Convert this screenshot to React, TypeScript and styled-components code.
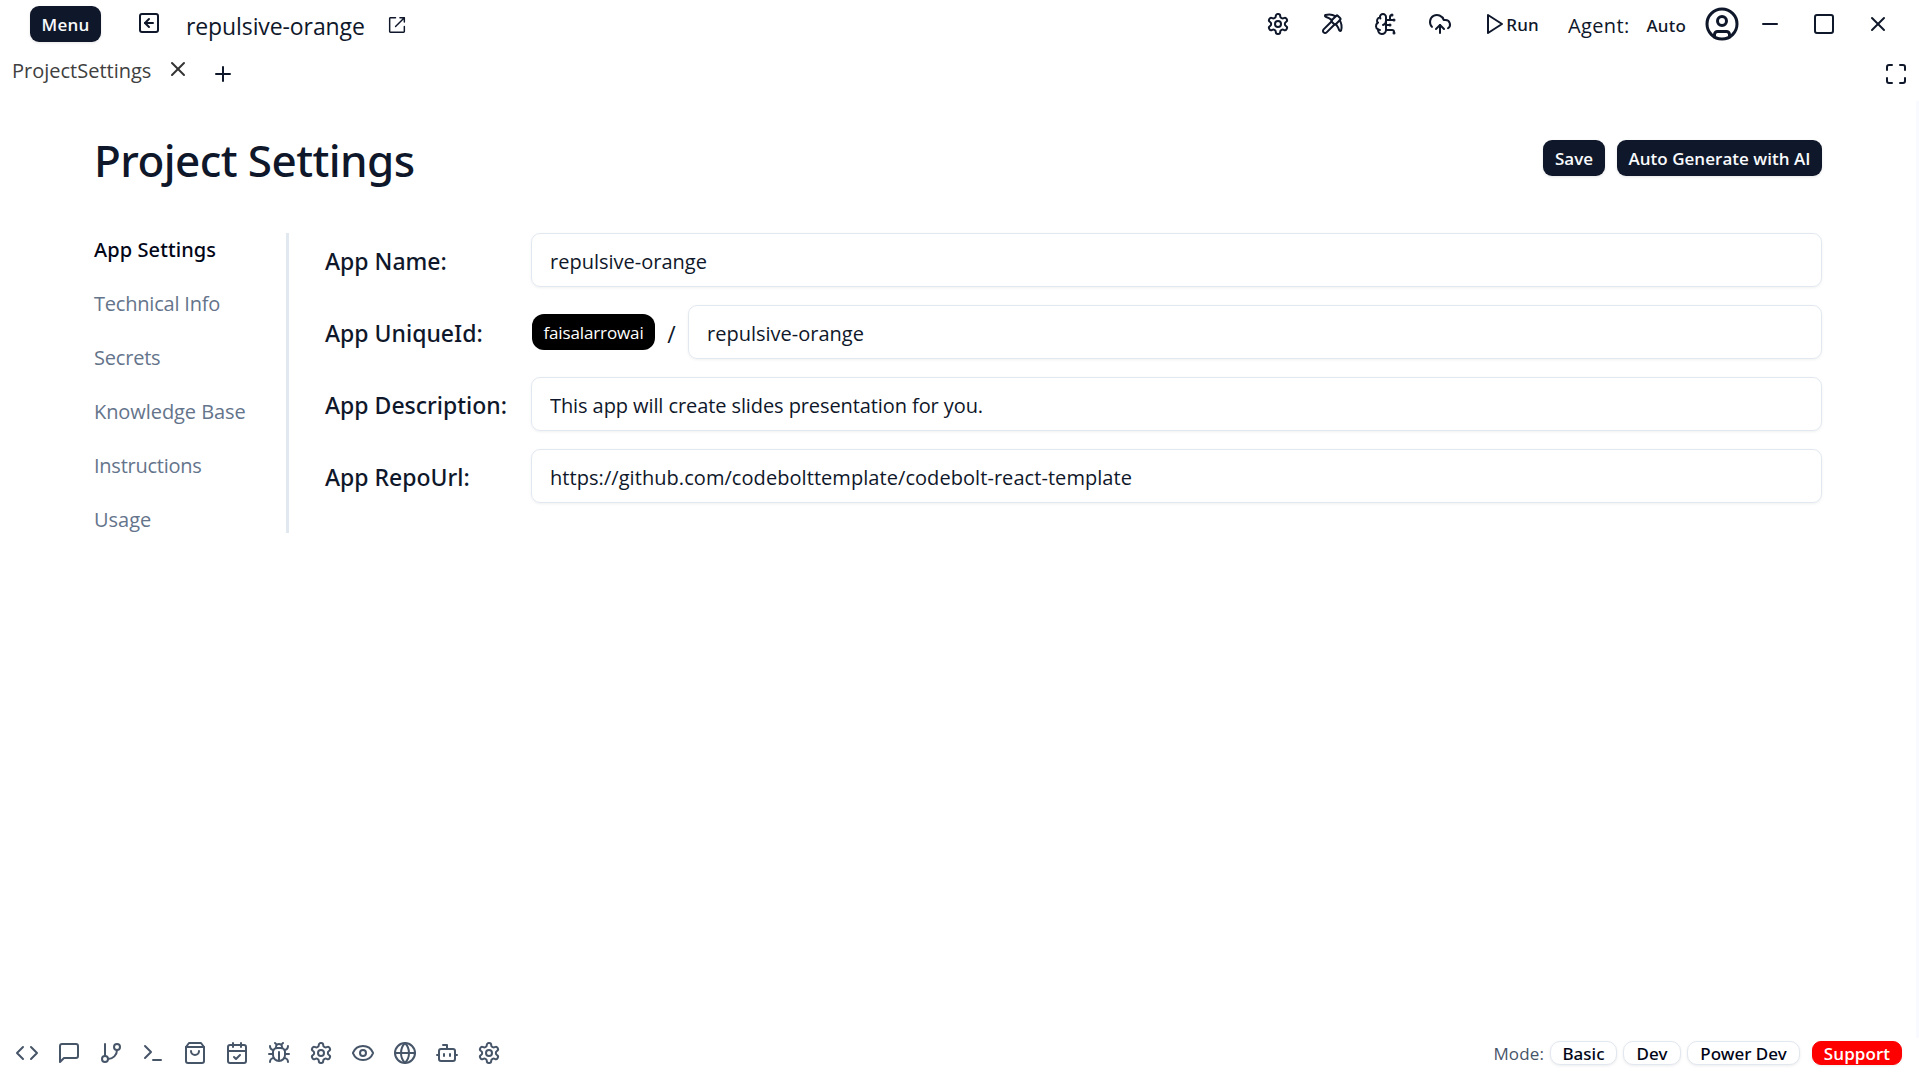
import React from "react";
import styled, { createGlobalStyle } from "styled-components";
import {
  SquareArrowLeft,
  BrainCircuit,
  CloudUpload,
  CircleUser,
  Minus,
  Square,
  X,
  Plus,
  Maximize,
  GitBranch,
  Terminal,
  CalendarCheck,
  Eye,
  Globe,
  Bot,
} from "lucide-react";
import { RxExternalLink } from "react-icons/rx";

const ink = "#0f172a";
const slate = "#64748b";
const line = "#e2e8f0";
const regular = `"Open Sans", "Noto Sans", sans-serif`;
const medium = `"Noto Sans", "Open Sans", sans-serif`;
const softShadow = "0 1px 3px rgba(0, 0, 0, 0.1)";

const GlobalStyle = createGlobalStyle`
  * { box-sizing: border-box; }
  body { margin: 0; background: #fff; color: ${ink}; font-family: ${regular}; overflow: hidden; }
  svg { display: block; flex: none; }
`;

const Page = styled.div`
  display: flex;
  flex-direction: column;
  height: 100vh;
`;

const TopBar = styled.header`
  display: flex;
  align-items: center;
  justify-content: space-between;
  height: 48px;
  padding: 0 29px 0 30px;
`;

const Group = styled.div<{ $gap?: number }>`
  display: flex;
  align-items: center;
  gap: ${(p) => p.$gap ?? 0}px;
`;

const Button = styled.button<{ $width: number; $spacing?: number }>`
  width: ${(p) => p.$width}px;
  height: 36px;
  padding: 1px 0 0;
  border: 0;
  border-radius: 9px;
  background: ${ink};
  color: #f8fafc;
  box-shadow: ${softShadow};
  font: 600 17px/35px ${regular};
  letter-spacing: ${(p) => p.$spacing ?? 0}px;
  white-space: nowrap;
`;

const BackLink = styled.a`
  margin: -3px 0 0 36px;
`;

const ProjectName = styled.span`
  margin-left: 25px;
  padding-top: 4px;
  font-size: 23px;
  line-height: 36px;
  letter-spacing: -0.1px;
`;

const OpenLink = styled.a`
  margin: 2px 0 0 21px;
`;

const RunButton = styled.div`
  display: flex;
  align-items: center;
  font: 500 17px/24px ${medium};
  letter-spacing: 0.25px;
`;

const RunText = styled.span`
  padding-top: 1px;
`;

const AgentLabel = styled.span`
  margin-left: 29px;
  padding-top: 4px;
  font-size: 20px;
  line-height: 30px;
  letter-spacing: 0.35px;
`;

const AgentValue = styled.span`
  margin: 0 18px 0 17px;
  padding-top: 4px;
  font: 500 17px/30px ${medium};
  letter-spacing: 0.2px;
`;

const WindowControls = styled.div`
  display: flex;
  gap: 30px;
  margin-left: 18px;
`;

const TabBar = styled.div`
  display: flex;
  justify-content: space-between;
  height: 53px;
  padding: 9px 11px 0 12px;
`;

const Tab = styled.div`
  display: flex;
  align-items: flex-start;
  color: #333;
`;

const TabTitle = styled.span`
  margin-right: 15px;
  font-size: 20px;
  line-height: 27px;
  color: #404040;
`;

const AddTab = styled.div`
  margin: 5px 0 0 21px;
`;

const ExpandIcon = styled.div`
  margin-top: 5px;
`;

const Body = styled.div`
  display: flex;
  flex: none;
  height: 937px;
`;

const ScrollTrack = styled.div`
  width: 3px;
  background: #f8faff;
`;

const Content = styled.main`
  flex: 1;
  padding: 32px 94px 0 94px;
`;

const Heading = styled.div`
  display: flex;
  justify-content: space-between;
  align-items: flex-start;
  height: 100px;
`;

const Title = styled.h1`
  margin: 0;
  font: 500 44px/54px ${medium};
  letter-spacing: -0.58px;
`;

const Actions = styled.div`
  display: flex;
  gap: 12px;
  padding-top: 7px;
`;

const Settings = styled.div`
  display: flex;
`;

const Nav = styled.nav`
  display: flex;
  flex-direction: column;
  gap: 24px;
  width: 195px;
  height: 300px;
  border-right: 3px solid ${line};
`;

const NavItem = styled.a<{ $active?: boolean; $spacing: number }>`
  height: 30px;
  padding-top: 2px;
  font-family: ${(p) => (p.$active ? medium : regular)};
  font-weight: ${(p) => (p.$active ? 500 : 400)};
  font-size: 20px;
  line-height: 30px;
  letter-spacing: ${(p) => p.$spacing}px;
  color: ${(p) => (p.$active ? "#020617" : slate)};
`;

const Form = styled.div`
  flex: 1;
  display: flex;
  flex-direction: column;
  gap: 18px;
  padding-left: 36px;
`;

const Field = styled.label`
  display: flex;
  align-items: center;
  height: 54px;
`;

const FieldLabel = styled.span`
  width: 206px;
  padding-top: 2px;
  font: 500 23px/36px ${medium};
  letter-spacing: 0;
`;

const Input = styled.input<{ $spacing?: number }>`
  flex: 1;
  min-width: 0;
  height: 54px;
  padding: 3px 17px 0 18px;
  border: 1px solid ${line};
  border-radius: 9px;
  outline: 0;
  background: transparent;
  box-shadow: 0 1px 3px rgba(0, 0, 0, 0.06);
  color: ${ink};
  font: 400 20px/30px ${regular};
  letter-spacing: ${(p) => p.$spacing ?? 0}px;
`;

const Owner = styled.span`
  width: 123px;
  height: 36px;
  margin-left: 1px;
  border-radius: 12px;
  background: #000;
  color: #fff;
  font-size: 17px;
  line-height: 37px;
  letter-spacing: -0.12px;
  text-align: center;
`;

const Slash = styled.span`
  width: 33px;
  padding-top: 3px;
  font-size: 23px;
  line-height: 30px;
  text-align: center;
`;

const Footer = styled.footer`
  display: flex;
  flex: 1;
  align-items: flex-start;
  justify-content: space-between;
  padding: 3px 17px 0 15px;
  color: #475569;
`;

const ModeLabel = styled.span`
  margin-right: 6px;
  padding-top: 1px;
  font-size: 17px;
  line-height: 23px;
  letter-spacing: 0.13px;
`;

const Pill = styled.button<{ $width: number; $spacing?: number }>`
  width: ${(p) => p.$width}px;
  height: 24px;
  padding: 1px 0 0;
  border: 1px solid ${line};
  border-radius: 10px;
  background: #fff;
  box-shadow: 0 1px 3px rgba(0, 0, 0, 0.08);
  color: #020617;
  font: 500 17px/21px ${medium};
  letter-spacing: ${(p) => p.$spacing ?? 0}px;
  white-space: nowrap;
`;

const SupportPill = styled(Pill)`
  margin-left: 6px;
  border-color: red;
  border-radius: 9px;
  background: red;
  color: #fff;
  font: 600 17px/21px ${regular};
`;

const Outline = ({ children }: { children: React.ReactNode }) => (
  <svg
    width="24"
    height="24"
    viewBox="0 0 24 24"
    fill="none"
    stroke="currentColor"
    strokeWidth="2"
    strokeLinecap="round"
    strokeLinejoin="round"
  >
    {children}
  </svg>
);

const Gear = () => (
  <Outline>
    <path d="M12.22 2h-.44a2 2 0 0 0-2 2v.18a2 2 0 0 1-1 1.73l-.43.25a2 2 0 0 1-2 0l-.15-.08a2 2 0 0 0-2.73.73l-.22.38a2 2 0 0 0 .73 2.73l.15.1a2 2 0 0 1 1 1.72v.51a2 2 0 0 1-1 1.74l-.15.09a2 2 0 0 0-.73 2.73l.22.38a2 2 0 0 0 2.73.73l.15-.08a2 2 0 0 1 2 0l.43.25a2 2 0 0 1 1 1.73V20a2 2 0 0 0 2 2h.44a2 2 0 0 0 2-2v-.18a2 2 0 0 1 1-1.73l.43-.25a2 2 0 0 1 2 0l.15.08a2 2 0 0 0 2.73-.73l.22-.39a2 2 0 0 0-.73-2.73l-.15-.08a2 2 0 0 1-1-1.74v-.5a2 2 0 0 1 1-1.74l.15-.09a2 2 0 0 0 .73-2.73l-.22-.38a2 2 0 0 0-2.73-.73l-.15.08a2 2 0 0 1-2 0l-.43-.25a2 2 0 0 1-1-1.73V4a2 2 0 0 0-2-2z" />
    <circle cx="12" cy="12" r="3" />
  </Outline>
);

const Pick = () => (
  <Outline>
    <path d="M14.531 12.469 6.619 20.38a1 1 0 1 1-3-3l7.912-7.912" />
    <path d="M15.686 4.314A12.5 12.5 0 0 0 5.461 2.958 1 1 0 0 0 5.58 4.71a22 22 0 0 1 6.318 3.393" />
    <path d="M17.7 3.7a1 1 0 0 0-1.4 0l-4.6 4.6a1 1 0 0 0 0 1.4l2.6 2.6a1 1 0 0 0 1.4 0l4.6-4.6a1 1 0 0 0 0-1.4z" />
    <path d="M19.686 8.314a12.501 12.501 0 0 1 1.356 10.225 1 1 0 0 1-1.751-.119 22 22 0 0 0-3.393-6.319" />
  </Outline>
);

const Triangle = () => (
  <Outline>
    <path d="M6 3l14 9-14 9z" />
  </Outline>
);

const Brackets = () => (
  <Outline>
    <path d="M16 18l6-6-6-6" />
    <path d="M8 6l-6 6 6 6" />
  </Outline>
);

const Message = () => (
  <Outline>
    <path d="M21 15a2 2 0 0 1-2 2H7l-4 4V5a2 2 0 0 1 2-2h14a2 2 0 0 1 2 2z" />
  </Outline>
);

const Bag = () => (
  <Outline>
    <path d="M6 2 3 6v14a2 2 0 0 0 2 2h14a2 2 0 0 0 2-2V6l-3-4Z" />
    <path d="M3 6h18" />
    <path d="M16 10a4 4 0 0 1-8 0" />
  </Outline>
);

const Beetle = () => (
  <Outline>
    <path d="m8 2 1.88 1.88M14.12 3.88 16 2M9 7.13v-1a3.003 3.003 0 1 1 6 0v1" />
    <path d="M12 20c-3.3 0-6-2.7-6-6v-3a4 4 0 0 1 4-4h4a4 4 0 0 1 4 4v3c0 3.3-2.7 6-6 6M12 20v-9" />
    <path d="M6.53 9C4.6 8.8 3 7.1 3 5M6 13H2M3 21c0-2.1 1.7-3.9 3.8-4" />
    <path d="M20.97 5c0 2.1-1.6 3.8-3.5 4M22 13h-4M17.2 17c2.1.1 3.8 1.9 3.8 4" />
  </Outline>
);

const navItems = [
  { text: "App Settings", spacing: 0.1, active: true },
  { text: "Technical Info", spacing: -0.2 },
  { text: "Secrets", spacing: -0.2 },
  { text: "Knowledge Base", spacing: -0.07 },
  { text: "Instructions", spacing: -0.24 },
  { text: "Usage", spacing: 0 },
];

export default function App() {
  return (
    <Page>
      <GlobalStyle />
      <TopBar>
        <Group>
          <Button $width={71} $spacing={0.2}>Menu</Button>
          <BackLink><SquareArrowLeft size={24} /></BackLink>
          <ProjectName>repulsive-orange</ProjectName>
          <OpenLink><RxExternalLink size={22} /></OpenLink>
        </Group>
        <Group>
          <Group $gap={30}>
            <Gear />
            <Pick />
            <BrainCircuit size={24} />
            <CloudUpload size={24} />
            <RunButton>
              <Triangle />
              <RunText>Run</RunText>
            </RunButton>
          </Group>
          <AgentLabel>Agent:</AgentLabel>
          <AgentValue>Auto</AgentValue>
          <CircleUser size={36} />
          <WindowControls>
            <Minus size={24} />
            <Square size={24} />
            <X size={24} />
          </WindowControls>
        </Group>
      </TopBar>

      <TabBar>
        <Tab>
          <TabTitle>ProjectSettings</TabTitle>
          <X size={24} />
          <AddTab><Plus size={24} color={ink} /></AddTab>
        </Tab>
        <ExpandIcon><Maximize size={24} /></ExpandIcon>
      </TabBar>

      <Body>
        <Content>
          <Heading>
            <Title>Project Settings</Title>
            <Actions>
              <Button $width={62}>Save</Button>
              <Button $width={205} $spacing={0.04}>Auto Generate with AI</Button>
            </Actions>
          </Heading>
          <Settings>
            <Nav>
              {navItems.map((item) => (
                <NavItem key={item.text} $active={item.active} $spacing={item.spacing}>
                  {item.text}
                </NavItem>
              ))}
            </Nav>
            <Form>
              <Field>
                <FieldLabel>App Name:</FieldLabel>
                <Input defaultValue="repulsive-orange" />
              </Field>
              <Field>
                <FieldLabel>App UniqueId:</FieldLabel>
                <Owner>faisalarrowai</Owner>
                <Slash>/</Slash>
                <Input defaultValue="repulsive-orange" />
              </Field>
              <Field>
                <FieldLabel>App Description:</FieldLabel>
                <Input $spacing={-0.09} defaultValue="This app will create slides presentation for you." />
              </Field>
              <Field>
                <FieldLabel>App RepoUrl:</FieldLabel>
                <Input $spacing={0.06} defaultValue="https://github.com/codebolttemplate/codebolt-react-template" />
              </Field>
            </Form>
          </Settings>
        </Content>
        <ScrollTrack />
      </Body>

      <Footer>
        <Group $gap={18}>
          <Brackets />
          <Message />
          <GitBranch size={24} />
          <Terminal size={24} />
          <Bag />
          <CalendarCheck size={24} />
          <Beetle />
          <Gear />
          <Eye size={24} />
          <Globe size={24} />
          <Bot size={24} />
          <Gear />
        </Group>
        <Group>
          <ModeLabel>Mode:</ModeLabel>
          <Group $gap={6}>
            <Pill $width={67}>Basic</Pill>
            <Pill $width={58}>Dev</Pill>
            <Pill $width={113}>Power Dev</Pill>
            <SupportPill $width={90} $spacing={0.08}>Support</SupportPill>
          </Group>
        </Group>
      </Footer>
    </Page>
  );
}
